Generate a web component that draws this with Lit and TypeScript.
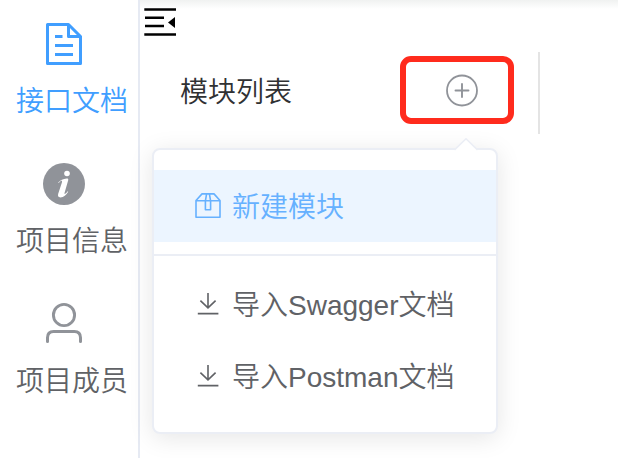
import { LitElement, html, css, svg } from "lit";
import { customElement, property } from "lit/decorators.js";

const icons: Record<string, { size: number; body: unknown }> = {
  document: {
    size: 48,
    body: svg`<path d="M7.5 4.5H28.5L40.5 16.5V43.5H7.5Z M28.5 4.5V16.5H40.5 M15 16.5H22.5 M15 25.5H33 M15 34.5H33" stroke-width="3" stroke-linejoin="round"/>`,
  },
  info: {
    size: 48,
    body: svg`<circle cx="24" cy="24" r="21" fill="currentColor" stroke="none"/>
      <circle cx="27" cy="13.5" r="2.8" fill="#fff" stroke="none"/>
      <path d="M18.2 22.6C20.3 20 23.1 18.9 26.7 18.5C28 18.4 28.5 19.1 28.2 20.3L24.6 32.8C24.3 34.1 24.8 34.2 25.6 33.6C26.5 32.9 27.1 32 27.7 31.2L28.2 31.7C26.2 35 23.8 37.4 20.4 37.4C18.3 37.4 17.6 36 18.2 33.8L21.9 22.4C22.3 21.2 21.9 20.7 21 20.9C20 21.2 19.4 22 18.7 23Z" fill="#fff" stroke="none"/>`,
  },
  user: {
    size: 48,
    body: svg`<circle cx="24" cy="15" r="10.6" stroke-width="2.9"/><path d="M7.5 41.5V37.8Q7.5 31.6 13.7 31.6H34.3Q40.5 31.6 40.5 37.8V41.5" stroke-width="3" stroke-linecap="round"/>`,
  },
  fold: {
    size: 32,
    body: svg`<path d="M0.3 1.5H32 M1 9.7H20 M1 18H20 M0.3 26.5H32" stroke-width="2.6"/><path d="M31 9V20L24 14.5Z" fill="currentColor" stroke="none"/>`,
  },
  plus: {
    size: 32,
    body: svg`<circle cx="16" cy="16.5" r="15" stroke-width="1.8"/><path d="M16 10V23M9.5 16.5H22.5" stroke-width="1.9" stroke-linecap="round"/>`,
  },
  box: {
    size: 28,
    body: svg`<path d="M2 8.5V25.3H26V8.5L20 1.9H8Z M2 8.8H26 M12.6 1.9L11.4 8.8V17.7H16.6V8.8L15.4 1.9" stroke-width="1.6" stroke-linejoin="round"/>`,
  },
  download: {
    size: 28,
    body: svg`<path d="M14 3V17.8M6.4 10.6L14 17.8L21.6 10.6M3.8 23.6H24.4" stroke-width="1.6"/>`,
  },
};

@customElement("ui-icon")
class UiIcon extends LitElement {
  @property() name = "document";
  static styles = css`
    :host { display: block; line-height: 0; flex: none; }
    svg { display: block; fill: none; stroke: currentColor; overflow: visible; }
  `;
  render() {
    const { size, body } = icons[this.name];
    return html`<svg width=${size} height=${size} viewBox="0 0 ${size} ${size}">${body}</svg>`;
  }
}

@customElement("app-root")
class AppRoot extends LitElement {
  static styles = css`
    :host {
      display: flex;
      width: 618px;
      height: 458px;
      overflow: hidden;
      background: #fff;
      color: #606266;
      font: 350 28px/40px "Liberation Sans", "Noto Sans CJK SC", sans-serif;
      white-space: nowrap;
    }
    .side {
      box-sizing: border-box;
      flex: none;
      width: 140px;
      height: 458px;
      border-right: 2px solid #e6eaf3;
      padding-left: 16px;
    }
    .nav { height: 120px; padding-top: 20px; }
    .nav ui-icon { margin: 0 0 14px 24px; color: #909399; }
    .nav.active, .nav.active ui-icon { color: #409eff; }
    .main { flex: 1; min-width: 0; position: relative; }
    .shade {
      position: absolute;
      inset: 0 0 auto 0;
      height: 9px;
      background: linear-gradient(#f0f2f1, #fff);
    }
    .fold { position: relative; height: 44px; padding: 8px 0 0 4px; color: #000; }
    .bar {
      box-sizing: border-box;
      display: flex;
      align-items: center;
      width: 400px;
      height: 82px;
      padding: 0 24px 0 40px;
      border-right: 2px solid #e4e4e4;
      color: #303133;
    }
    .title { flex: 1; }
    .add {
      box-sizing: border-box;
      display: flex;
      align-items: center;
      width: 114px;
      height: 68px;
      padding-left: 40px;
      margin-bottom: 6px;
      border: 6px solid #ff2b1d;
      border-radius: 11px;
      color: #909399;
    }
    .menu {
      position: absolute;
      left: 12px;
      top: 148px;
      box-sizing: border-box;
      width: 346px;
      height: 286px;
      padding: 20px 0;
      border: 2px solid #ebeef5;
      border-radius: 8px;
      background: #fff;
      box-shadow: 0 4px 24px rgba(0, 0, 0, 0.1);
    }
    .tip { position: absolute; left: 300px; top: -12px; display: block; }
    .item {
      display: flex;
      align-items: center;
      gap: 10px;
      height: 72px;
      padding-left: 40px;
    }
    .item span { padding-top: 3px; }
    .item.hover { background: #ecf5ff; color: #66b1ff; }
    .line { height: 2px; margin: 12px 0; background: #ebeef5; }
  `;

  private nav = [
    { icon: "document", label: "接口文档", active: true },
    { icon: "info", label: "项目信息", active: false },
    { icon: "user", label: "项目成员", active: false },
  ];

  render() {
    return html`
      <nav class="side">
        ${this.nav.map(
          (n) => html`<div class="nav ${n.active ? "active" : ""}">
            <ui-icon name=${n.icon}></ui-icon>
            <div>${n.label}</div>
          </div>`
        )}
      </nav>
      <main class="main">
        <div class="shade"></div>
        <div class="fold"><ui-icon name="fold"></ui-icon></div>
        <div class="bar">
          <div class="title">模块列表</div>
          <div class="add"><ui-icon name="plus"></ui-icon></div>
        </div>
        <div class="menu">
          <svg class="tip" width="24" height="14" viewBox="0 0 24 14">
            <path d="M0.5 12L12 0.8L23.5 12V14H0.5Z" fill="#fff" />
            <path d="M0.5 12L12 0.8L23.5 12" fill="none" stroke="#ebeef5" stroke-width="1.6" />
          </svg>
          <div class="item hover"><ui-icon name="box"></ui-icon><span>新建模块</span></div>
          <div class="line"></div>
          <div class="item"><ui-icon name="download"></ui-icon><span>导入Swagger文档</span></div>
          <div class="item"><ui-icon name="download"></ui-icon><span>导入Postman文档</span></div>
        </div>
      </main>
    `;
  }
}
